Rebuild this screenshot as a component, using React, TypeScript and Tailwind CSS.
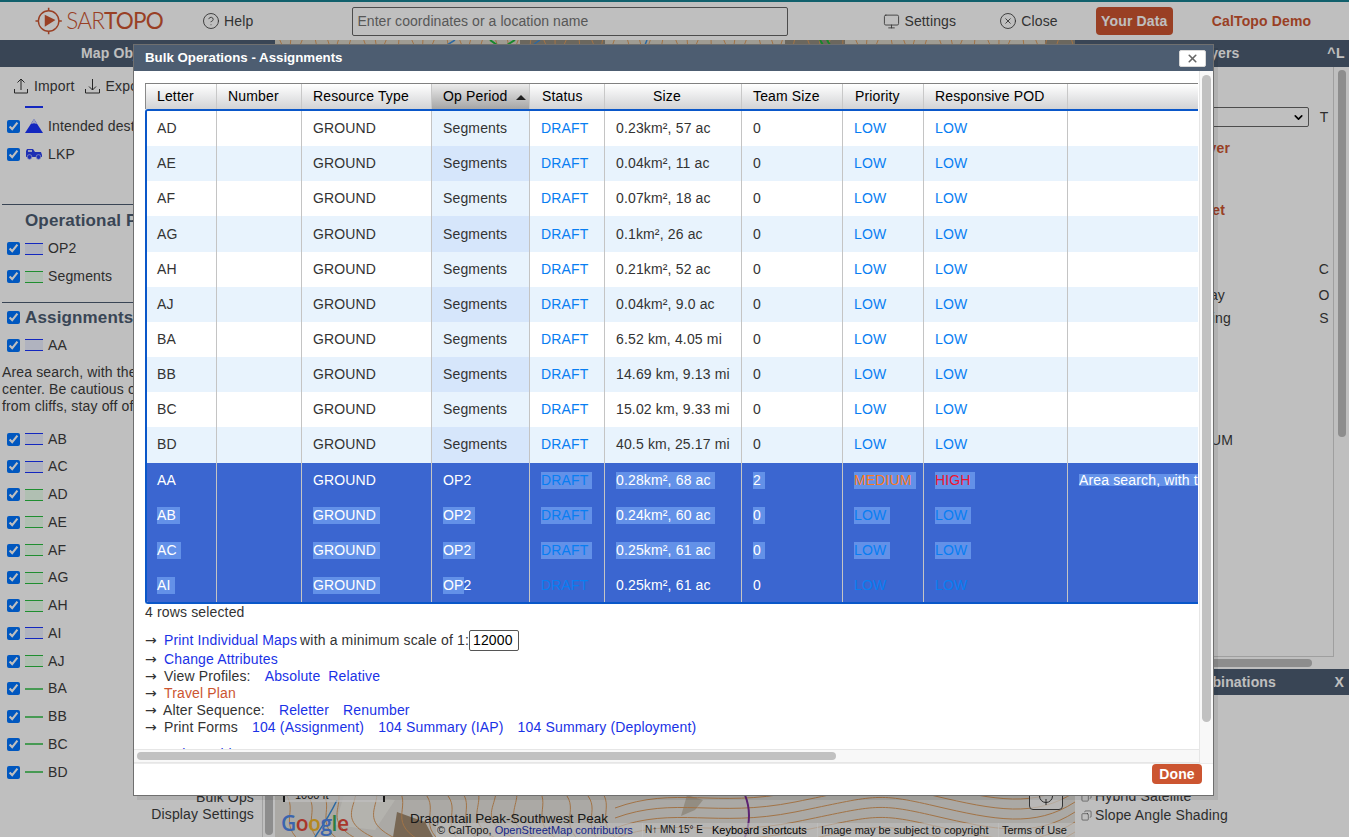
import React from "react";
import { CircleHelp, Monitor, CircleX, X, Copy, ChevronDown } from "lucide-react";

type Row = { l: string; op: string; size: string; team?: string; pri?: string; pod?: string; note?: string; sel?: number };

const rows: Row[] = [
  { l: "AD", op: "Segments", size: "0.23km², 57 ac" },
  { l: "AE", op: "Segments", size: "0.04km², 11 ac" },
  { l: "AF", op: "Segments", size: "0.07km², 18 ac" },
  { l: "AG", op: "Segments", size: "0.1km², 26 ac" },
  { l: "AH", op: "Segments", size: "0.21km², 52 ac" },
  { l: "AJ", op: "Segments", size: "0.04km², 9.0 ac" },
  { l: "BA", op: "Segments", size: "6.52 km, 4.05 mi" },
  { l: "BB", op: "Segments", size: "14.69 km, 9.13 mi" },
  { l: "BC", op: "Segments", size: "15.02 km, 9.33 mi" },
  { l: "BD", op: "Segments", size: "40.5 km, 25.17 mi" },
  { l: "AA", op: "OP2", size: "0.28km², 68 ac", team: "2", pri: "MEDIUM", pod: "HIGH", note: "Area search, with the saddle at its center", sel: 1 },
  { l: "AB", op: "OP2", size: "0.24km², 60 ac", sel: 2 },
  { l: "AC", op: "OP2", size: "0.25km², 61 ac", sel: 2 },
  { l: "AI", op: "OP2", size: "0.25km², 61 ac", sel: 3 },
];

const GRID_H = "grid grid-cols-[71px_85px_130px_98px_75px_137px_101px_81px_144px_300px] h-full";
const GRID_B = "grid grid-cols-[69px_85px_130px_98px_75px_137px_101px_81px_144px_300px] h-full";

function Hl({ on, children, className = "" }: { on: boolean; children: React.ReactNode; className?: string }) {
  return <span className={`inline-block h-[17px] leading-[17px] pr-[4px] whitespace-nowrap ${on ? "bg-[#6391e8]" : ""} ${className}`}>{children}</span>;
}

function priColor(v: string) {
  if (v === "MEDIUM") return "text-[#ff7a1a]";
  if (v === "HIGH") return "text-[#f0142f]";
  return "text-[#087ef2]";
}

function TableRow({ r, i }: { r: Row; i: number }) {
  const s = !!r.sel;
  const main = r.sel === 2 || r.sel === 3;
  const rest = r.sel === 1 || r.sel === 2;
  const odd = i % 2 === 1;
  const bg = s ? "bg-[#3b66d0]" : odd ? "bg-[#e8f3fd]" : "bg-white";
  const opBg = s ? "" : odd ? "bg-[#d6e6fb]" : "bg-[#e8f3fd]";
  const text = s ? "text-white" : "text-[#333333]";
  const cell = "flex items-center border-l border-[#c4c4c4] pl-[11px] overflow-hidden whitespace-nowrap";
  const pri = r.pri ?? "LOW";
  const pod = r.pod ?? "LOW";
  return (
    <div className={`h-[35.17px] ${bg} ${text}`}>
      <div className={GRID_B}>
        <div className="flex items-center pl-[10px]"><Hl on={main}>{r.l}</Hl></div>
        <div className={cell} />
        <div className={cell}><Hl on={main}>GROUND</Hl></div>
        <div className={`${cell} ${opBg}`}>
          {r.sel === 3 ? (
            <span className="leading-[17px]"><span className="inline-block h-[17px] bg-[#6391e8]">OP</span>2</span>
          ) : (
            <Hl on={main}>{r.op}</Hl>
          )}
        </div>
        <div className={`${cell} text-[#087ef2]`}><Hl on={rest}>DRAFT</Hl></div>
        <div className={cell}><Hl on={rest}>{r.size}</Hl></div>
        <div className={cell}><Hl on={rest}>{r.team ?? "0"}</Hl></div>
        <div className={`${cell} ${priColor(pri)}`}><Hl on={rest}>{pri}</Hl></div>
        <div className={`${cell} ${priColor(pod)}`}><Hl on={rest}>{pod}</Hl></div>
        <div className={cell}>
          {r.note && <span className="inline-block h-[12px] leading-[13px] bg-[#6391e8] whitespace-nowrap">{r.note}</span>}
        </div>
      </div>
    </div>
  );
}

function HeaderCell({ children, first, sorted, center, pad }: { children?: React.ReactNode; first?: boolean; sorted?: boolean; center?: boolean; pad?: boolean }) {
  return (
    <div
      className={`flex items-center ${center ? "justify-center pr-[12px]" : pad ? "pl-[12px]" : "pl-[11px]"} border-l ${first ? "border-[#8a8a8a]" : "border-[#c8c8c8]"} ${
        sorted ? "bg-gradient-to-b from-[#ececec] to-[#a6a6a6]" : ""
      } relative whitespace-nowrap`}
    >
      {children}
    </div>
  );
}

function TableView() {
  return (
    <div className="overflow-hidden">
      <div className="h-[26px] border-t border-[#808080] bg-gradient-to-b from-white to-[#d2d3d5] text-black">
        <div className={GRID_H}>
          <HeaderCell first>Letter</HeaderCell>
          <HeaderCell>Number</HeaderCell>
          <HeaderCell>Resource Type</HeaderCell>
          <HeaderCell sorted>
            Op Period
            <svg className="absolute left-[84px] top-[11px]" width="10" height="5" viewBox="0 0 10 5"><path d="M0 5 L5 0 L10 5 Z" fill="#222" /></svg>
          </HeaderCell>
          <HeaderCell pad>Status</HeaderCell>
          <HeaderCell center>Size</HeaderCell>
          <HeaderCell>Team Size</HeaderCell>
          <HeaderCell pad>Priority</HeaderCell>
          <HeaderCell>Responsive POD</HeaderCell>
          <HeaderCell />
        </div>
      </div>
      <div className="h-[495px] box-border border-y-2 border-l-2 border-[#0a57c9] rounded-tl-[3px] rounded-bl-[3px] overflow-hidden">
        {rows.map((r, i) => <TableRow key={r.l} r={r} i={i} />)}
      </div>
    </div>
  );
}

function A({ children, className = "" }: { children: React.ReactNode; className?: string }) {
  return <span className={`text-[#1a32e6] ${className}`}>{children}</span>;
}

function Arrow({ w = "w-[19px]" }: { w?: string }) {
  return <span className={`inline-block ${w} font-['DejaVu_Sans',sans-serif] text-[14px] leading-[17px] tracking-normal`}>→</span>;
}

function Actions() {
  return (
    <div className="text-[14px] text-[#333333] whitespace-nowrap">
      <div className="h-[17px] leading-[17px]">4 rows selected</div>
      <div className="h-[22px] mt-[8px] flex items-center">
        <Arrow />
        <A>Print Individual Maps</A>
        <span className="ml-[3px]">with a minimum scale of 1:</span>
        <input readOnly value="12000" className="w-[50px] h-[21px] border border-[#555] rounded-[2px] pl-[3px] text-black bg-white" />
      </div>
      <div className="h-[17px] leading-[17px]"><Arrow /><A>Change Attributes</A></div>
      <div className="h-[17px] leading-[17px]"><Arrow />View Profiles:<A className="ml-[14px]">Absolute</A><A className="ml-[8px]">Relative</A></div>
      <div className="h-[17px] leading-[17px]"><Arrow /><span className="text-[#cc5531]">Travel Plan</span></div>
      <div className="h-[17px] leading-[17px]"><Arrow w="w-[18px]" />Alter Sequence:<A className="ml-[14px]">Reletter</A><A className="ml-[14px]">Renumber</A></div>
      <div className="h-[17px] leading-[17px]"><Arrow />Print Forms<A className="ml-[14px]">104 (Assignment)</A><A className="ml-[14px]">104 Summary (IAP)</A><A className="ml-[14px]">104 Summary (Deployment)</A></div>
      <div className="h-[17px] leading-[17px] mt-[10px]"><Arrow /><A>Delete Objects</A></div>
    </div>
  );
}

function Modal() {
  return (
    <div className="absolute left-[133px] top-[44px] w-[1081px] h-[752px] z-20 border border-[#6f6f6f] bg-white flex flex-col shadow-[4px_4px_0_rgba(0,0,0,0.07)]">
      <div className="h-[26px] bg-[#4d5d71] flex items-center justify-between pl-[11px] pr-[7px] shrink-0">
        <span className="text-white font-bold text-[13.3px] tracking-normal">Bulk Operations - Assignments</span>
        <span className="w-[27px] h-[17px] bg-white rounded-[2px] flex items-center justify-center border border-[#d8d8d8]">
          <X size={13} strokeWidth={3} className="text-[#666]" />
        </span>
      </div>
      <div className="h-[692px] flex shrink-0">
        <div className="w-[1065px] flex flex-col">
          <div className="h-[678px] overflow-hidden pl-[11px] pr-[1px] pt-[12px] text-[14px]">
            <TableView />
            <Actions />
          </div>
          <div className="h-[14px] bg-[#f8f8f8] border-y border-[#e6e6e6] pl-[3px] flex items-center">
            <div className="w-[699px] h-[8px] rounded-full bg-[#c1c1c1]" />
          </div>
        </div>
        <div className="w-[14px] bg-[#f8f8f8] border-l border-[#e6e6e6] pt-[4px] flex justify-center">
          <div className="w-[9px] h-[647px] rounded-full bg-[#c1c1c1]" />
        </div>
      </div>
      <div className="flex-1 flex justify-end pr-[11px] border-t border-[#ececec]">
        <span className="h-[20px] w-[50px] rounded-[4px] bg-[#cc5531] text-white font-bold text-[14px] leading-[20px] text-center">Done</span>
      </div>
    </div>
  );
}

function Logo() {
  return (
    <div className="w-[128px] flex items-center text-[#cc5531]">
      <svg width="28" height="28" viewBox="0 0 28 28" fill="none" stroke="#cc5531">
        <circle cx="14" cy="14" r="10.5" strokeWidth="1.4" />
        <path d="M14 0.5V3.5M14 24.5V27.5M0.5 14H3.5M24.5 14H27.5" strokeWidth="1.6" />
        <path d="M10 7.5 L21 13 L10 20 Z" fill="#cc5531" stroke="none" />
      </svg>
      <span className="ml-[4px] text-[22.5px] tracking-[-0.8px] font-['Lato',sans-serif] font-light">SAR</span>
      <span className="text-[22.5px] tracking-[-0.8px] font-['Lato',sans-serif]">TOPO</span>
    </div>
  );
}

function Header() {
  return (
    <header className="h-[40px] shrink-0 bg-white border-t-2 border-[#178090] flex items-center pl-[35px] text-[14px] text-[#444444]">
      <Logo />
      <CircleHelp size={18} strokeWidth={1.2} className="ml-[39px]" />
      <span className="ml-[4px]">Help</span>
      <div className="ml-[99px] w-[436px] h-[29px] border border-[#666] rounded-[2px] pl-[4px] flex items-center text-[#757575] tracking-[0.06px]">Enter coordinates or a location name</div>
      <Monitor size={17} strokeWidth={1.2} className="ml-[95px]" />
      <span className="ml-[4px]">Settings</span>
      <CircleX size={18} strokeWidth={1.2} className="ml-[43px]" />
      <span className="ml-[4px]">Close</span>
      <span className="ml-[38px] w-[77px] h-[28px] rounded-[4px] bg-[#cc5531] text-white font-bold flex items-center justify-center">Your Data</span>
      <span className="ml-[39px] text-[#cc5531] font-bold">CalTopo Demo</span>
    </header>
  );
}

function Swatch({ color, fill, line }: { color: string; fill?: string; line?: boolean }) {
  return (
    <svg width="18" height="12" viewBox="0 0 18 12" className="shrink-0">
      {line ? (
        <path d="M0 6H18" stroke={color} strokeWidth="1.5" />
      ) : (
        <>
          <rect x="0" y="0" width="18" height="12" fill={fill} />
          <path d="M0 .5H18M0 11.5H18" stroke={color} strokeWidth="1" />
        </>
      )}
    </svg>
  );
}

const BLUE = "#1a34ff";
const GREEN = "#2abe40";
const BF = "#ebefff";
const GF = "#ebffee";

function Check() {
  return <input type="checkbox" defaultChecked className="w-[13px] h-[13px] m-0 shrink-0" />;
}

function ObjRow({ icon, label }: { icon: React.ReactNode; label: string }) {
  return (
    <div className="h-[27.75px] flex items-center pl-[7px] whitespace-nowrap">
      <Check />
      <span className="ml-[5px] w-[18px] flex justify-center shrink-0">{icon}</span>
      <span className="ml-[5px]">{label}</span>
    </div>
  );
}

const assignments: [string, "b" | "g" | "l"][] = [
  ["AB", "b"], ["AC", "b"], ["AD", "g"], ["AE", "g"], ["AF", "g"], ["AG", "g"], ["AH", "g"], ["AI", "b"], ["AJ", "g"],
  ["BA", "l"], ["BB", "l"], ["BC", "l"], ["BD", "l"],
];

function LeftPanel() {
  return (
    <aside className="w-[275px] shrink-0 bg-white text-[14px] text-[#3c3c3c] flex flex-col overflow-hidden">
      <div className="h-[27px] shrink-0 bg-[#4d5d72] text-white font-bold flex items-center pl-[81px]">Map Objects</div>
      <div className="flex-1 flex overflow-hidden">
        <div className="w-[262px] shrink-0 overflow-hidden">
          <div className="h-[38px] flex items-center pl-[14px]">
            <svg width="14" height="16" viewBox="0 0 14 16" fill="none" stroke="#333" strokeWidth="1"><path d="M7 12V1M3.5 4.5L7 1l3.5 3.5M.5 11v4h13v-4" /></svg>
            <span className="ml-[6px]">Import</span>
            <svg className="ml-[10px]" width="15" height="16" viewBox="0 0 15 16" fill="none" stroke="#333" strokeWidth="1"><path d="M7.5 1v11M4 8.5L7.5 12 11 8.5M.5 11v4h14v-4" /></svg>
            <span className="ml-[6px]">Export</span>
          </div>
          <div className="ml-[25px] w-[18px] h-[1.5px] mt-[1px] bg-[#1a34ff]" />
          <div className="mt-[5px]">
            <ObjRow label="Intended destination" icon={
              <svg width="18" height="14" viewBox="0 0 18 14"><path d="M9 0 L18 14 H0 Z" fill="#1a34ff" /><path d="M9 0 L12 5 L9 4.2 L6 5 Z" fill="#d7dcff" /></svg>
            } />
            <ObjRow label="LKP" icon={
              <svg width="18" height="12" viewBox="0 0 18 12"><path d="M1 7V3l1-2h6l2 3h6l1 3v2H1z" fill="#2a40f0" /><circle cx="4.5" cy="9" r="2.4" fill="#2a40f0" stroke="#cfd4ff" strokeWidth=".7" /><circle cx="13.5" cy="9" r="2.4" fill="#2a40f0" stroke="#cfd4ff" strokeWidth=".7" /><rect x="3" y="2" width="4" height="2" fill="#cfd4ff" /></svg>
            } />
          </div>
          <div className="mt-[36px] ml-[2px] border-t border-[#4d5d72]" />
          <div className="h-[30px] pl-[25px] pt-[2px] flex items-center text-[17px] font-bold text-[#4d5d72] whitespace-nowrap">Operational Periods</div>
          <ObjRow label="OP2" icon={<Swatch color={BLUE} fill={BF} />} />
          <ObjRow label="Segments" icon={<Swatch color={GREEN} fill={GF} />} />
          <div className="mt-[11px] ml-[2px] border-t border-[#4d5d72]" />
          <div className="h-[29px] pl-[7px] pt-[1px] flex items-center text-[17px] font-bold text-[#4d5d72]">
            <input type="checkbox" defaultChecked className="w-[13px] h-[13px] shrink-0" />
            <span className="ml-[5px]">Assignments</span>
          </div>
          <ObjRow label="AA" icon={<Swatch color={BLUE} fill={BF} />} />
          <div className="pl-[2px] mt-[5px] leading-[17px] whitespace-nowrap">
            <div>Area search, with the saddle at its</div>
            <div>center. Be cautious on the steep</div>
            <div>from cliffs, stay off of the snow</div>
          </div>
          <div className="mt-[10px]">
            {assignments.map(([n, k]) => (
              <ObjRow key={n} label={n} icon={k === "b" ? <Swatch color={BLUE} fill={BF} /> : k === "g" ? <Swatch color={GREEN} fill={GF} /> : <Swatch color={GREEN} line />} />
            ))}
          </div>
          <div className="mt-[3px] pr-[8px] text-right leading-[17px]">
            <div>Bulk Ops</div>
            <div>Display Settings</div>
          </div>
        </div>
        <div className="w-[13px] border-l border-[#d8d8d8] flex justify-center pt-[4px] pb-[2px]">
          <div className="w-[8px] h-full rounded-full bg-[#bcbcbc]" />
        </div>
      </div>
    </aside>
  );
}

function MapArt() {
  const paths: string[] = [];
  for (let k = 0; k < 68; k++) {
    const x = k * 12 - 8;
    const w = 6 * Math.sin(k * 1.7);
    paths.push(`M${x} -2 L${x + w} 12`);
  }
  for (let k = 0; k < 18; k++) {
    const x = k * 20 - 20;
    const w = 14 * Math.sin(k * 0.9);
    paths.push(`M${x} 745 C${x + 20 + w} 765 ${x - 10 + w} 780 ${x + 24} 800`);
  }
  for (let k = 0; k < 7; k++) {
    const y = 738 + k * 10;
    paths.push(`M340 ${y + 30} C400 ${y + 8} 440 ${y + 30} 520 ${y + 14} S600 ${y - 6} 660 ${y + 8} S760 ${y + 30} 800 ${y + 4}`);
  }
  return (
    <svg className="block w-full h-full" viewBox="0 0 800 797" preserveAspectRatio="none">
      <rect width="800" height="797" fill="#e4e2dc" />
      <path d="M122 772 L150 782 L158 797 L118 797 Z" fill="#a08a70" />
      <path d="M412 755 L428 760 L420 770 L406 776 Z" fill="#c4bcae" />
      <path d="M70 752 L120 760 L100 790 L60 785 Z" fill="#f1efe9" />
      <path d="M0 0H800V5H0Z" fill="#d5d0c4" />
      <path d="M245 0H330V5H245ZM770 0H800V5H770ZM510 0H570V5H510Z" fill="#8f8a7e" />
      <g fill="none" stroke="#d99a5e" strokeWidth="1">{paths.map((d, i) => <path key={i} d={d} />)}</g>
      <path d="M470 755 Q478 775 470 797" fill="none" stroke="#7a2c98" strokeWidth="2" />
      <path d="M62 760 Q55 775 40 797" fill="none" stroke="#3a8bd8" strokeWidth="1.5" />
      <path d="M215 0L222 5M240 0L232 5M545 0L548 5M552 0L555 5" stroke="#1fb53a" strokeWidth="2" />
      <path d="M180 0L172 5M265 0L258 5M372 0L370 5" stroke="#3a8bd8" strokeWidth="1.5" />
    </svg>
  );
}

function MapArea() {
  return (
    <main className="flex-1 relative overflow-hidden tracking-normal">
      <MapArt />
      <div className="absolute left-[8px] top-[748px] w-[102px] h-[14px] bg-white/70 border-x-2 border-[#222] text-[11px] text-[#222] pl-[10px] leading-[14px]">1000 ft</div>
      <div className="absolute left-[754px] top-[742px] w-[34px] h-[28px] rounded-[4px] border border-[#444] bg-white/70 flex items-center justify-center">
        <svg width="18" height="18" viewBox="0 0 18 18" fill="none" stroke="#333"><circle cx="9" cy="9" r="6.5" /><path d="M9 0V6M9 12V18" /></svg>
      </div>
      <div className="absolute left-[6px] bottom-[2px] text-[21px] font-semibold font-['Open_Sans',sans-serif] tracking-[-0.5px] leading-[24px]">
        <span className="text-[#4f86e8]">G</span><span className="text-[#e0483a]">o</span><span className="text-[#f0b62a]">o</span><span className="text-[#4f86e8]">g</span><span className="text-[#3aa857]">l</span><span className="text-[#e0483a]">e</span>
      </div>
      <div className="absolute left-[135px] top-[769px] text-[13.5px] text-[#222] whitespace-nowrap">Dragontail Peak-Southwest Peak</div>
      <div className="absolute right-0 bottom-0 h-[14px] flex text-[11px] leading-[14px] text-[#222] whitespace-nowrap">
        <span className="bg-white/60 w-[206px] pl-[1px] overflow-hidden">© CalTopo, <span className="text-[#1a32b8]">OpenStreetMap contributors</span></span>
        <span className="bg-white/60 w-[70px] pl-[2px] border-l border-white/70 text-[10px]">N↑ MN 15° E</span>
        <span className="bg-white/60 w-[105px] text-black">Keyboard shortcuts</span>
        <span className="bg-white/60 w-[181px] pl-[3px] border-l border-white/70">Image may be subject to copyright</span>
        <span className="bg-white/60 w-[77px] pl-[3px] border-l border-white/70">Terms of Use</span>
      </div>
    </main>
  );
}

function LayerRow({ w, label, key2, mt = "", cls = "" }: { w: string; label: string; key2?: string; mt?: string; cls?: string }) {
  return (
    <div className={`h-[20px] ${mt} flex items-center whitespace-nowrap ${cls}`}>
      <span className={`${w} text-right`}>{label}</span>
      {key2 && <span className="ml-auto w-[16px] text-center">{key2}</span>}
    </div>
  );
}

function RightPanel() {
  return (
    <aside className="w-[274px] shrink-0 bg-white text-[14px] text-[#3c3c3c] flex flex-col overflow-hidden">
      <div className="h-[27px] shrink-0 bg-[#4d5d72] text-white font-bold flex items-center">
        <span className="ml-[86px]">Map Layers</span>
        <span className="ml-auto mr-[4px] tracking-[0.5px]">^L</span>
      </div>
      <div className="h-[590px] shrink-0 flex">
        <div className="w-[259px] shrink-0 border-r border-b border-[#d4d4d4] pl-[2px] pr-[1px]">
          <div className="mt-[40px] h-[20px] flex items-center">
            <div className="ml-[8px] w-[224px] h-[20px] border border-[#666] rounded-[2px] flex items-center justify-end pr-[3px]">
              <ChevronDown size={13} strokeWidth={3} className="text-black" />
            </div>
            <span className="ml-auto w-[16px] text-center text-[#3c3c3c]">T</span>
          </div>
          <LayerRow w="w-[153px]" mt="mt-[11px]" label="Add Custom Server" cls="font-bold text-[#cc5531]" />
          <LayerRow w="w-[148px]" mt="mt-[42px]" label="Save as Preset" cls="font-bold text-[#cc5531]" />
          <LayerRow w="w-[130px]" mt="mt-[39px]" label="Contours" key2="C" />
          <LayerRow w="w-[148px]" mt="mt-[6px]" label="Map Overlay" key2="O" />
          <LayerRow w="w-[154px]" mt="mt-[3px]" label="Slope Shading" key2="S" />
          <LayerRow w="w-[156px]" mt="mt-[102px]" label="WGS84 DATUM" />
        </div>
        <div className="flex-1 flex justify-center pt-[3px]">
          <div className="w-[8px] h-[367px] rounded-full bg-[#bcbcbc]" />
        </div>
      </div>
      <div className="h-[12px] shrink-0 pl-[135px] flex items-center">
        <div className="w-[102px] h-[8px] rounded-full bg-[#bcbcbc]" />
      </div>
      <div className="h-[26px] shrink-0 bg-[#4d5d72] text-white font-bold flex items-center">
        <span className="w-[201px] text-right whitespace-nowrap">Map Layer Combinations</span>
        <span className="ml-auto mr-[5px]">X</span>
      </div>
      <div className="pl-[6px] mt-[92px] leading-[19px] text-[14px]">
        <div className="flex items-center gap-[3px]"><Copy size={11} strokeWidth={1.2} className="-scale-x-100" />Hybrid Satellite</div>
        <div className="flex items-center gap-[3px]"><Copy size={11} strokeWidth={1.2} className="-scale-x-100" />Slope Angle Shading</div>
      </div>
    </aside>
  );
}

export default function App() {
  return (
    <div className="relative w-[1349px] h-[837px] overflow-hidden flex flex-col tracking-[0.15px] font-['Liberation_Sans',Arial,sans-serif]">
      <Header />
      <div className="flex-1 flex overflow-hidden">
        <LeftPanel />
        <MapArea />
        <RightPanel />
      </div>
      <div className="absolute inset-0 z-10 bg-black/25" />
      <Modal />
    </div>
  );
}
